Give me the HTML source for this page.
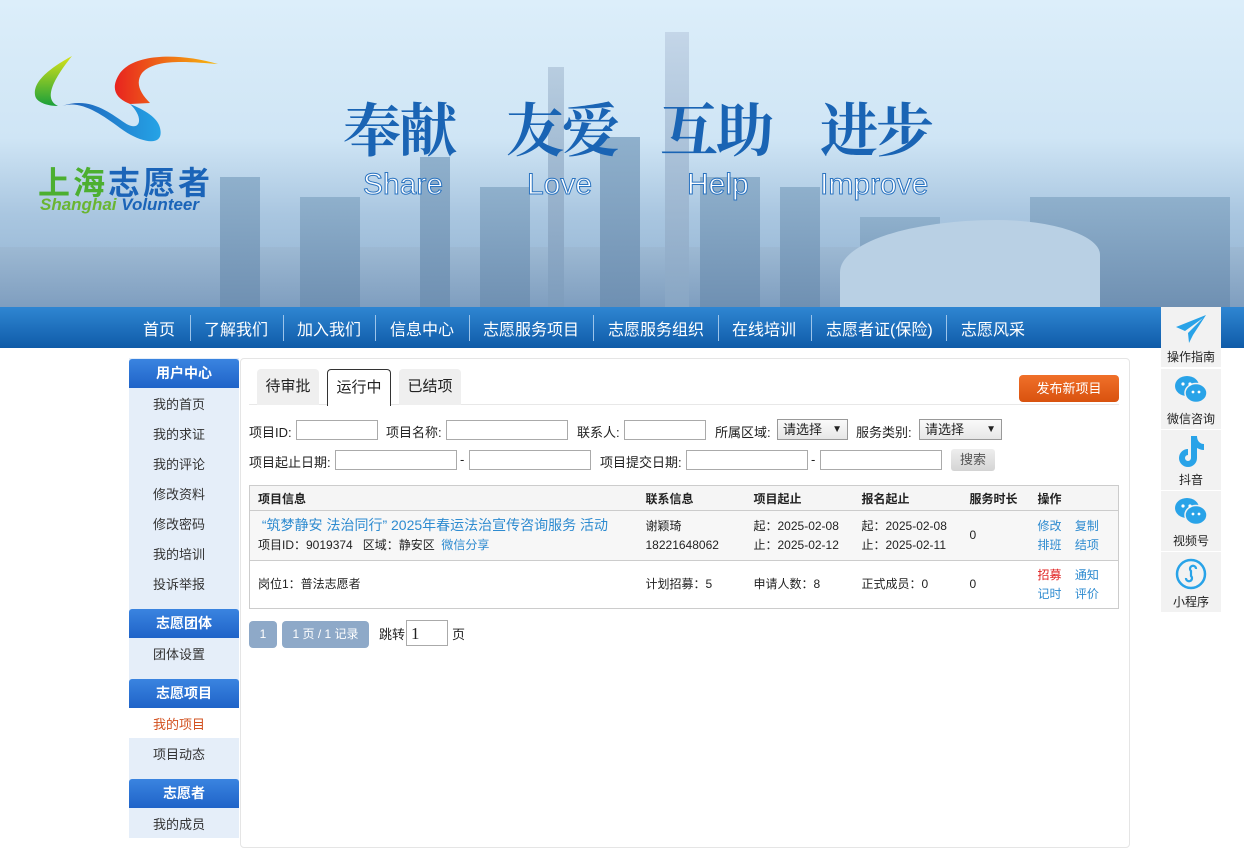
<!DOCTYPE html>
<html><head><meta charset="utf-8"><style>
*{margin:0;padding:0;box-sizing:border-box}
body{width:1244px;height:838px;overflow:hidden;background:#fff;font-family:"Liberation Sans","Noto Sans CJK SC",sans-serif;font-size:13px;color:#222;position:relative}
.banner{position:absolute;left:0;top:0;width:1244px;height:307px;background:linear-gradient(180deg,#dceefa 0%,#cfe5f5 45%,#a9c6e0 70%,#8fb0cf 100%);overflow:hidden}
.bld{position:absolute;bottom:0;background:linear-gradient(180deg,#8fb0cc,#6f90b2)}
.nav{position:absolute;left:0;top:307px;width:1244px;height:41px;background:linear-gradient(180deg,#2f86d2,#0f5ba8)}
.nav span{position:absolute;top:9px;color:#fff;font-size:16px}
.nav i{position:absolute;top:8px;width:1px;height:26px;background:#9cc4ea}
.side{position:absolute;left:129px;top:358px;width:110px;height:480px;background:#e5eef9}
.sh{position:absolute;left:0;width:110px;height:29px;background:linear-gradient(180deg,#3a84e0,#1f63c8);border-radius:3px 3px 0 0;color:#fff;font-weight:bold;font-size:14px;text-align:center;line-height:29px}
.si{position:absolute;left:24px;font-size:13px;color:#333}
.main{position:absolute;left:240px;top:358px;width:890px;height:490px;border:1px solid #e5e5e5;border-radius:4px}
.tab{position:absolute;top:369px;height:36px;background:#efefef;border-radius:4px 4px 0 0;font-size:15px;line-height:36px;text-align:center}
.lbl{position:absolute;font-size:13px}
.inp{position:absolute;height:20px;border:1px solid #aaa;background:#fff}
.sel{position:absolute;height:21px;border:1px solid #999;background:linear-gradient(#fafafa,#e6e6e6);font-size:13px;line-height:19px;padding-left:5px}
.sel:after{content:"▼";position:absolute;right:5px;font-size:10px}
table{position:absolute;left:249px;top:485px;width:870px;border-collapse:collapse;border:1px solid #ccc;font-size:12px}
td{vertical-align:middle}
.a{color:#2e8bd0}
.side-r{position:absolute;left:1161px;width:60px;height:60px;background:#f2f2f2;text-align:center;font-size:12px;color:#222}
.side-r div{position:absolute;left:0;width:60px;bottom:2px}
.cal{position:absolute;top:84px;font-family:'Noto Serif CJK SC',serif;font-size:58px;font-weight:bold;color:#1a64b4;white-space:nowrap;letter-spacing:-2px}
.en{position:absolute;top:168px;font-size:30px;color:#fff;-webkit-text-stroke:1px #2a73c0}
</style></head><body>
<div class="banner">
  <div class="bld" style="left:0;width:1244px;height:60px;background:linear-gradient(180deg,#9db9d3,#7f9ebf)"></div>
  <div class="bld" style="left:220px;width:40px;height:130px"></div>
  <div class="bld" style="left:300px;width:60px;height:110px"></div>
  <div class="bld" style="left:420px;width:30px;height:150px"></div>
  <div class="bld" style="left:480px;width:50px;height:120px"></div>
  <div class="bld" style="left:548px;width:16px;height:240px;background:linear-gradient(#b8cde0,#7d9cbc)"></div>
  <div class="bld" style="left:600px;width:40px;height:170px"></div>
  <div class="bld" style="left:665px;width:24px;height:275px;background:linear-gradient(#c4d6e8,#88a6c4)"></div>
  <div class="bld" style="left:700px;width:60px;height:130px"></div>
  <div class="bld" style="left:780px;width:40px;height:120px"></div>
  <div class="bld" style="left:860px;width:80px;height:90px"></div>
  <div class="bld" style="left:1030px;width:200px;height:110px"></div>
  <div style="position:absolute;left:840px;top:220px;width:260px;height:87px;background:#b9d0e4;border-radius:60% 40% 0 0"></div>
  <svg style="position:absolute;left:30px;top:48px" width="190" height="100" viewBox="0 0 190 100">
    <defs><linearGradient id="r" x1="0" x2="1"><stop offset="0" stop-color="#e8231f"/><stop offset="1" stop-color="#f6b90e"/></linearGradient>
    <linearGradient id="b" x1="0" x2="1"><stop offset="0" stop-color="#1e5eb7"/><stop offset="1" stop-color="#25a3e6"/></linearGradient>
    <linearGradient id="g" x1="0" x2="0" y1="1" y2="0"><stop offset="0" stop-color="#1aa03a"/><stop offset="1" stop-color="#d8e21a"/></linearGradient></defs>
    <path d="M42 8 C20 20 0 35 6 50 C10 56 20 58 28 58 C16 52 18 38 42 8Z" fill="url(#g)"/>
    <path d="M32 58 C50 52 70 65 90 80 C110 95 135 100 130 80 C128 70 115 62 100 56 C115 70 110 85 95 75 C80 65 60 48 32 58Z" fill="url(#b)"/>
    <path d="M100 56 C85 50 80 40 90 25 C105 5 150 5 188 16 C160 14 125 10 112 25 C105 35 110 45 120 55Z" fill="url(#r)"/>
  </svg>
  <div style="position:absolute;left:38px;top:158px;font-size:32px;font-weight:bold;letter-spacing:3px;color:#4caf30">上海<span style="color:#1b64b8">志愿者</span></div>
  <div style="position:absolute;left:40px;top:195px;font-size:17px;font-weight:bold;font-style:italic;color:#6ab531">Shanghai <span style="color:#1b64b8">Volunteer</span></div>
  <div class="cal" style="left:343px">奉献</div>
  <div class="cal" style="left:506px">友爱</div>
  <div class="cal" style="left:660px">互助</div>
  <div class="cal" style="left:820px">进步</div>
  <div class="en" style="left:363px">Share</div>
  <div class="en" style="left:527px">Love</div>
  <div class="en" style="left:687px">Help</div>
  <div class="en" style="left:820px">Improve</div>
</div>
<div class="nav">
  <span style="left:143px">首页</span><i style="left:190px"></i>
  <span style="left:204px">了解我们</span><i style="left:283px"></i>
  <span style="left:297px">加入我们</span><i style="left:375px"></i>
  <span style="left:390px">信息中心</span><i style="left:469px"></i>
  <span style="left:483px">志愿服务项目</span><i style="left:593px"></i>
  <span style="left:608px">志愿服务组织</span><i style="left:718px"></i>
  <span style="left:732px">在线培训</span><i style="left:811px"></i>
  <span style="left:826px">志愿者证(保险)</span><i style="left:946px"></i>
  <span style="left:961px">志愿风采</span>
</div>
<div class="side">
  <div class="sh" style="top:1px">用户中心</div>
  <div class="si" style="top:36px">我的首页</div>
  <div class="si" style="top:66px">我的求证</div>
  <div class="si" style="top:96px">我的评论</div>
  <div class="si" style="top:126px">修改资料</div>
  <div class="si" style="top:156px">修改密码</div>
  <div class="si" style="top:186px">我的培训</div>
  <div class="si" style="top:216px">投诉举报</div>
  <div class="sh" style="top:251px">志愿团体</div>
  <div class="si" style="top:286px">团体设置</div>
  <div class="sh" style="top:321px">志愿项目</div>
  <div style="position:absolute;top:350px;left:0;width:110px;height:30px;background:#fff"></div>
  <div class="si" style="top:356px;color:#d2501e">我的项目</div>
  <div class="si" style="top:386px">项目动态</div>
  <div class="sh" style="top:421px">志愿者</div>
  <div class="si" style="top:456px">我的成员</div>
</div>
<div class="main"></div>
<div style="position:absolute;left:249px;top:404px;width:870px;height:1px;background:#e8e8e8"></div>
<div class="tab" style="left:257px;width:62px">待审批</div>
<div class="tab" style="left:327px;width:64px;background:#fff;border:1px solid #333;border-bottom:none;top:369px;height:37px">运行中</div>
<div class="tab" style="left:399px;width:62px">已结项</div>
<div style="position:absolute;left:1019px;top:375px;width:100px;height:27px;background:linear-gradient(#f0702a,#d9520f);border-radius:4px;color:#fff;font-size:13px;text-align:center;line-height:27px">发布新项目</div>
<div class="lbl" style="left:249px;top:422px">项目ID:</div><div class="inp" style="left:296px;top:420px;width:82px"></div>
<div class="lbl" style="left:386px;top:422px">项目名称:</div><div class="inp" style="left:446px;top:420px;width:122px"></div>
<div class="lbl" style="left:577px;top:422px">联系人:</div><div class="inp" style="left:624px;top:420px;width:82px"></div>
<div class="lbl" style="left:715px;top:422px">所属区域:</div><div class="sel" style="left:777px;top:419px;width:71px">请选择</div>
<div class="lbl" style="left:856px;top:422px">服务类别:</div><div class="sel" style="left:919px;top:419px;width:83px">请选择</div>
<div class="lbl" style="left:249px;top:452px">项目起止日期:</div><div class="inp" style="left:335px;top:450px;width:122px"></div>
<div class="lbl" style="left:460px;top:452px">-</div><div class="inp" style="left:469px;top:450px;width:122px"></div>
<div class="lbl" style="left:600px;top:452px">项目提交日期:</div><div class="inp" style="left:686px;top:450px;width:122px"></div>
<div class="lbl" style="left:811px;top:452px">-</div><div class="inp" style="left:820px;top:450px;width:122px"></div>
<div style="position:absolute;left:951px;top:449px;width:44px;height:22px;background:linear-gradient(#eee,#d4d4d4);border-radius:3px;text-align:center;line-height:22px;color:#555">搜索</div>
<table>
<tr style="height:25px;background:#f5f5f5;font-weight:bold;border-bottom:1px solid #ccc"><td style="padding-left:8px;width:396px">项目信息</td><td style="width:108px">联系信息</td><td style="width:108px">项目起止</td><td style="width:108px">报名起止</td><td style="width:68px">服务时长</td><td>操作</td></tr>
<tr style="height:50px;background:#f7f7f7;border-bottom:1px solid #ccc;line-height:19px"><td style="padding-left:8px"><span class="a" style="font-size:14px">&nbsp;“筑梦静安 法治同行” 2025年春运法治宣传咨询服务 活动</span><br>项目ID：9019374&nbsp;&nbsp; 区域：静安区&nbsp; <span class="a">微信分享</span></td><td>谢颖琦<br>18221648062</td><td>起：2025-02-08<br>止：2025-02-12</td><td>起：2025-02-08<br>止：2025-02-11</td><td>0</td><td class="a">修改&nbsp;&nbsp;&nbsp;&nbsp;复制<br>排班&nbsp;&nbsp;&nbsp;&nbsp;结项</td></tr>
<tr style="height:48px;line-height:19px"><td style="padding-left:8px">岗位1：普法志愿者</td><td>计划招募：5</td><td>申请人数：8</td><td>正式成员：0</td><td>0</td><td class="a"><span style="color:#e02020">招募</span>&nbsp;&nbsp;&nbsp;&nbsp;通知<br>记时&nbsp;&nbsp;&nbsp;&nbsp;评价</td></tr>
</table>
<div style="position:absolute;left:249px;top:621px;width:28px;height:27px;background:#8ea9c8;border-radius:4px;color:#fff;text-align:center;line-height:27px;font-size:12px">1</div>
<div style="position:absolute;left:282px;top:621px;width:87px;height:27px;background:#8ea9c8;border-radius:4px;color:#fff;text-align:center;line-height:27px;font-size:12px">1 页 / 1 记录</div>
<div class="lbl" style="left:379px;top:624px">跳转</div>
<div style="position:absolute;left:406px;top:620px;width:42px;height:26px;border:1px solid #aaa;font-family:'Liberation Serif',serif;font-size:17px;padding:3px 4px">1</div>
<div class="lbl" style="left:452px;top:624px">页</div>

<div class="side-r" style="top:307px"><svg style="position:absolute;left:14px;top:6px" width="32" height="32" viewBox="0 0 32 32"><path d="M31 2 L1 14 L10 18 L28 5 L13 20 L14 30 L18 22 Z" fill="#29a3e8"/></svg><div>操作指南</div></div>
<div class="side-r" style="top:369px"><svg style="position:absolute;left:13px;top:6px" width="34" height="30" viewBox="0 0 34 30"><ellipse cx="13" cy="11" rx="12" ry="10" fill="#29a3e8"/><ellipse cx="22" cy="18" rx="11" ry="9.5" fill="#29a3e8" stroke="#f2f2f2" stroke-width="1.5"/><circle cx="9" cy="9" r="1.6" fill="#fff"/><circle cx="16" cy="9" r="1.6" fill="#fff"/><circle cx="19" cy="17" r="1.4" fill="#fff"/><circle cx="25" cy="17" r="1.4" fill="#fff"/></svg><div>微信咨询</div></div>
<div class="side-r" style="top:430px"><svg style="position:absolute;left:15px;top:4px" width="30" height="34" viewBox="0 0 30 34"><path d="M15 2 h6 c0 5 3 8 7 8 v6 c-3 0-5-1-7-2 v10 a9 9 0 1 1-9-9 v6 a3 3 0 1 0 3 3 Z" fill="#29a3e8"/></svg><div>抖音</div></div>
<div class="side-r" style="top:491px"><svg style="position:absolute;left:13px;top:6px" width="34" height="30" viewBox="0 0 34 30"><ellipse cx="13" cy="11" rx="12" ry="10" fill="#29a3e8"/><ellipse cx="22" cy="18" rx="11" ry="9.5" fill="#29a3e8" stroke="#f2f2f2" stroke-width="1.5"/><circle cx="9" cy="9" r="1.6" fill="#fff"/><circle cx="16" cy="9" r="1.6" fill="#fff"/><circle cx="19" cy="17" r="1.4" fill="#fff"/><circle cx="25" cy="17" r="1.4" fill="#fff"/></svg><div>视频号</div></div>
<div class="side-r" style="top:552px"><svg style="position:absolute;left:14px;top:6px" width="32" height="32" viewBox="0 0 32 32"><circle cx="16" cy="16" r="14" fill="none" stroke="#29a3e8" stroke-width="2.5"/><path d="M11 20 a3 3 0 1 0 5-2 l0-5 a3 3 0 1 1 5-2" fill="none" stroke="#29a3e8" stroke-width="2.2"/></svg><div>小程序</div></div>
</body></html>
